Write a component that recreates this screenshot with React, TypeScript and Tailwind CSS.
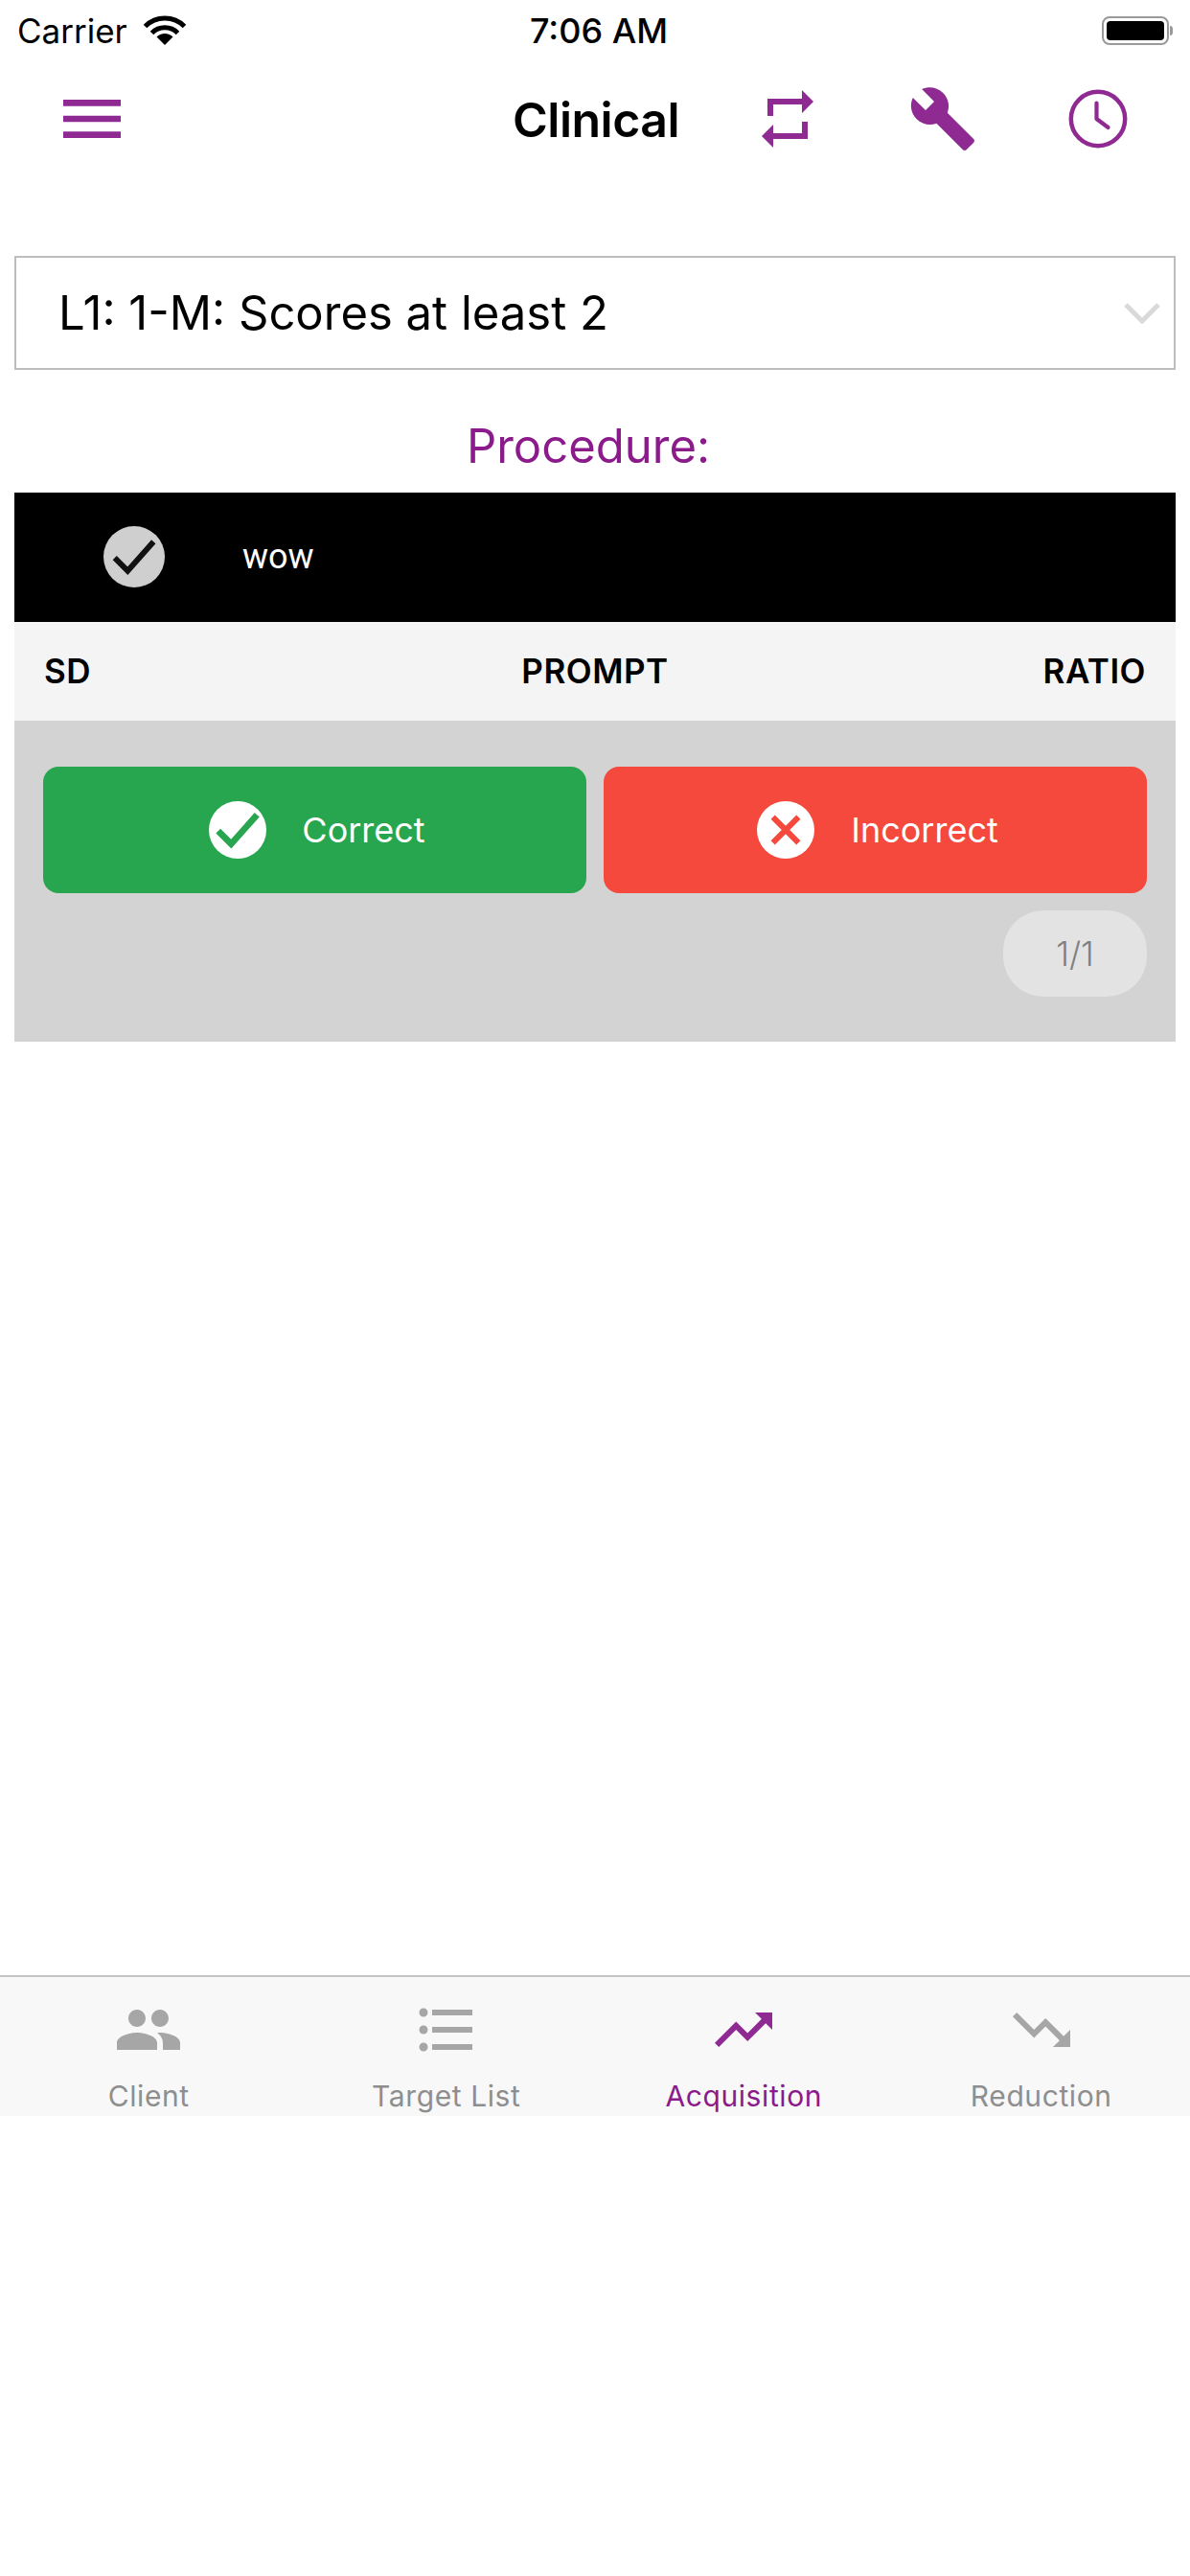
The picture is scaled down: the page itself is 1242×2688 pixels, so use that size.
const PURPLE = '#8f2a92';
const GREY = '#a6a6a6';

function Icon({ d, size, color }: { d: string; size: string; color: string }) {
  return (
    <svg viewBox="0 0 24 24" className={size} fill={color}>
      <path d={d} />
    </svg>
  );
}

const tabs = [
  {
    label: 'Client',
    active: false,
    d: 'M16 11c1.66 0 2.99-1.34 2.99-3S17.66 5 16 5c-1.66 0-3 1.34-3 3s1.34 3 3 3zm-8 0c1.66 0 2.99-1.34 2.99-3S9.66 5 8 5C6.34 5 5 6.34 5 8s1.34 3 3 3zm0 2c-2.33 0-7 1.17-7 3.5V19h14v-2.5c0-2.33-4.67-3.5-7-3.5zm8 0c-.29 0-.62.02-.97.05 1.16.84 1.97 1.97 1.97 3.45V19h6v-2.5c0-2.33-4.67-3.5-7-3.5z',
  },
  {
    label: 'Target List',
    active: false,
    d: 'M4 10.5c-.83 0-1.5.67-1.5 1.5s.67 1.5 1.5 1.5 1.5-.67 1.5-1.5-.67-1.5-1.5-1.5zm0-6c-.83 0-1.5.67-1.5 1.5S3.17 7.5 4 7.5 5.5 6.83 5.5 6 4.83 4.5 4 4.5zm0 12c-.83 0-1.5.68-1.5 1.5s.68 1.5 1.5 1.5 1.5-.68 1.5-1.5-.67-1.5-1.5-1.5zM7 19h14v-2H7v2zm0-6h14v-2H7v2zm0-8v2h14V5H7z',
  },
  {
    label: 'Acquisition',
    active: true,
    d: 'M16 6l2.29 2.29-4.88 4.88-4-4L2 16.59 3.41 18l6-6 4 4 6.3-6.29L22 12V6z',
  },
  {
    label: 'Reduction',
    active: false,
    d: 'M16 18l2.29-2.29-4.88-4.88-4 4L2 7.41 3.41 6l6 6 4-4 6.3 6.29L22 12v6z',
  },
];

function StatusBar() {
  return (
    <div className="grid h-[60px] grid-cols-3 items-center px-[18px] pt-1 font-['Inter',sans-serif] text-[35px] text-black">
      <div className="flex items-center gap-4">
        <span>Carrier</span>
        <svg viewBox="0 0 46 32" className="h-[32px] w-[46px]" fill="none" stroke="#000">
          <path d="M2.5 11.5a29 29 0 0 1 41 0" strokeWidth="5" />
          <path d="M9.5 18.5a19 19 0 0 1 27 0" strokeWidth="5" />
          <path d="M23 31 L14.5 22.5 a12 12 0 0 1 17 0 Z" fill="#000" stroke="none" />
        </svg>
      </div>
      <div className="pl-[8px] text-center text-[36px] font-medium">7:06 AM</div>
      <div className="flex items-center justify-end">
        <div className="flex h-[30px] w-[70px] items-center rounded-[8px] border-2 border-[#9a9a9a] p-[3px]">
          <div className="h-full w-full rounded-[4px] bg-black" />
        </div>
        <div className="ml-[1px] h-[10px] w-[3px] rounded-r-sm bg-[#9a9a9a]" />
      </div>
    </div>
  );
}

function NavBar() {
  return (
    <div className="mt-[28px] flex h-[72px] items-center pl-[56px] pr-[60px]">
      <Icon size="h-[80px] w-[80px]" color={PURPLE} d="M3 18h18v-2H3v2zm0-5h18v-2H3v2zm0-7v2h18V6H3z" />
      <h1 className="ml-[399px] pt-[3px] font-['Inter',sans-serif] text-[50px] font-semibold tracking-[-0.5px] text-black">Clinical</h1>
      <div className="ml-auto flex gap-[90px]">
        <Icon size="h-[72px] w-[72px]" color={PURPLE} d="M7 7h10v3l4-4-4-4v3H5v6h2V7zm10 10H7v-3l-4 4 4 4v-3h12v-6h-2v4z" />
        <Icon size="h-[72px] w-[72px]" color={PURPLE} d="M22.7 19l-9.1-9.1c.9-2.3.4-5-1.5-6.9-2-2-5-2.4-7.4-1.3L9 6 6 9 1.6 4.7C.4 7.1.9 10.1 2.9 12.1c1.9 1.9 4.6 2.4 6.9 1.5l9.1 9.1c.4.4 1 .4 1.4 0l2.3-2.3c.5-.4.5-1.1.1-1.4z" />
        <svg viewBox="0 0 24 24" className="h-[72px] w-[72px]" fill="none" stroke={PURPLE}>
          <circle cx="12" cy="12" r="9.4" strokeWidth="1.5" />
          <path d="M11.5 6.5V12l4 3" strokeWidth="1.4" strokeLinecap="round" strokeLinejoin="round" />
        </svg>
      </div>
    </div>
  );
}

function Select() {
  return (
    <div className="mx-[15px] mt-[107px] flex h-[119px] items-center justify-between border-2 border-[#bdbdbd] pl-[44px] pr-[14px]">
      <span className="font-['Inter',sans-serif] text-[49px] text-black">L1: 1-M: Scores at least 2</span>
      <svg viewBox="0 0 38 24" className="h-[24px] w-[38px]" fill="none" stroke="#d9d9d9" strokeWidth="5">
        <path d="M2 3l17 17L36 3" />
      </svg>
    </div>
  );
}

function TrialPanel() {
  return (
    <div className="mx-[15px] font-['Inter',sans-serif]">
      <div className="flex h-[135px] items-start bg-black">
        <div className="ml-[93px] mt-[35px] flex h-[64px] w-[64px] items-center justify-center rounded-full bg-[#cfcfcf]">
          <svg viewBox="0 0 24 24" className="h-[54px] w-[54px]" fill="none" stroke="#111" strokeWidth="2.6">
            <path d="M3 12.5l6 6L21 5" />
          </svg>
        </div>
        <span className="ml-[81px] mt-[46px] font-['Roboto',sans-serif] text-[36px] leading-[42px] text-white">wow</span>
      </div>
      <div className="grid h-[103px] grid-cols-3 items-center bg-[#f4f4f4] px-[31px] text-[35px] font-semibold tracking-[0.5px] text-black">
        <span>SD</span>
        <span className="text-center">PROMPT</span>
        <span className="text-right">RATIO</span>
      </div>
      <div className="h-[335px] bg-[#d3d3d3] px-[30px] pt-[48px]">
        <div className="grid grid-cols-2 gap-[18px]">
          <button className="flex h-[132px] items-center justify-center gap-[37px] rounded-[16px] bg-[#28a64f] pl-[5px] text-[36px] text-white">
            <span className="flex h-[60px] w-[60px] items-center justify-center rounded-full bg-white">
              <svg viewBox="0 0 24 24" className="h-[54px] w-[54px]" fill="none" stroke="#28a64f" strokeWidth="3">
                <path d="M3 12.5l6 6L21 5" />
              </svg>
            </span>
            Correct
          </button>
          <button className="flex h-[132px] items-center justify-center gap-[38px] rounded-[16px] bg-[#f4493c] pl-[5px] text-[36px] text-white">
            <span className="flex h-[60px] w-[60px] items-center justify-center rounded-full bg-white">
              <svg viewBox="0 0 24 24" className="h-[40px] w-[40px]" fill="none" stroke="#f4493c" strokeWidth="3.6">
                <path d="M4 4l16 16M20 4L4 20" />
              </svg>
            </span>
            Incorrect
          </button>
        </div>
        <div className="mt-[18px] flex justify-end">
          <div className="flex h-[90px] w-[150px] items-center justify-center rounded-[42px] bg-[#e3e3e3] text-[35px] font-light text-[#808080]">1/1</div>
        </div>
      </div>
    </div>
  );
}

function TabBar() {
  return (
    <div className="mt-[974px] grid h-[147px] grid-cols-4 border-t-2 border-[#c4c4c4] bg-[#f8f8f8] font-['Inter',sans-serif]">
      {tabs.map((tab) => (
        <div key={tab.label} className="flex flex-col items-center pt-[19px]">
          <Icon size="h-[72px] w-[72px]" color={tab.active ? PURPLE : GREY} d={tab.d} />
          <span className={`mt-[15px] text-[30px] leading-[36px] tracking-[0.6px] ${tab.active ? 'text-[#8b1a8b]' : 'text-[#8e8e8e]'}`}>
            {tab.label}
          </span>
        </div>
      ))}
    </div>
  );
}

export default function App() {
  return (
    <div className="h-[2688px] w-[1242px] overflow-hidden bg-white">
      <StatusBar />
      <NavBar />
      <Select />
      <div className="mb-[25px] mr-[14px] mt-[56px] text-center font-['Inter',sans-serif] text-[49px] leading-[47px] text-[#8b1a8b]">Procedure:</div>
      <TrialPanel />
      <TabBar />
    </div>
  );
}
